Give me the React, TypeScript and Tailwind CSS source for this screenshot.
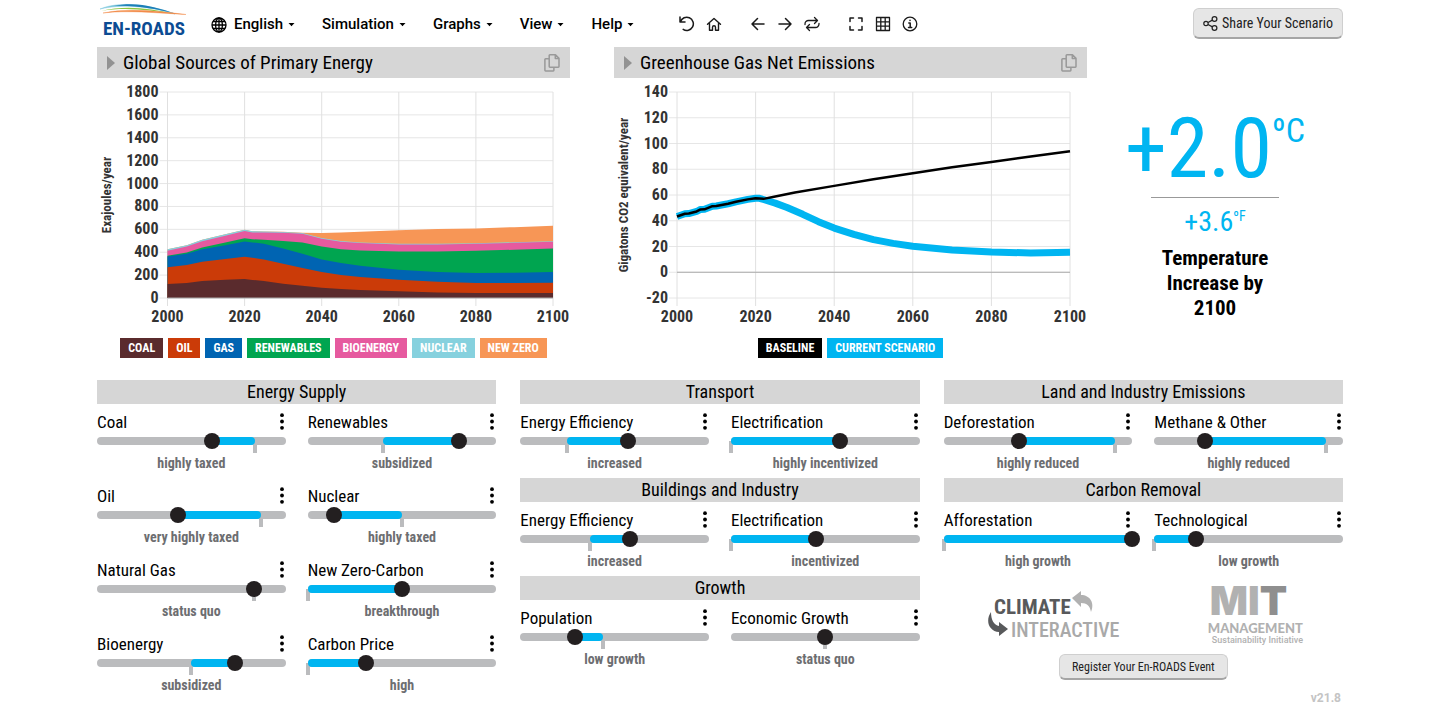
import { useState } from 'react'
import type { ReactNode } from 'react'

type SliderData = { name: string; status: string; value: number; start: number }
type Point = [number, number]

const supply: SliderData[] = [
  { name: 'Coal', status: 'highly taxed', value: 61, start: 84 },
  { name: 'Renewables', status: 'subsidized', value: 80, start: 40 },
  { name: 'Oil', status: 'very highly taxed', value: 43, start: 87 },
  { name: 'Nuclear', status: 'highly taxed', value: 14, start: 50 },
  { name: 'Natural Gas', status: 'status quo', value: 83, start: 83 },
  { name: 'New Zero-Carbon', status: 'breakthrough', value: 50, start: 0 },
  { name: 'Bioenergy', status: 'subsidized', value: 73, start: 50 },
  { name: 'Carbon Price', status: 'high', value: 31, start: 0 },
]

const transport: SliderData[] = [
  { name: 'Energy Efficiency', status: 'increased', value: 57, start: 25 },
  { name: 'Electrification', status: 'highly incentivized', value: 58, start: 0 },
]

const buildings: SliderData[] = [
  { name: 'Energy Efficiency', status: 'increased', value: 58, start: 37 },
  { name: 'Electrification', status: 'incentivized', value: 45, start: 0 },
]

const growth: SliderData[] = [
  { name: 'Population', status: 'low growth', value: 29, start: 44 },
  { name: 'Economic Growth', status: 'status quo', value: 50, start: 50 },
]

const land: SliderData[] = [
  { name: 'Deforestation', status: 'highly reduced', value: 40, start: 91 },
  { name: 'Methane & Other', status: 'highly reduced', value: 27, start: 91 },
]

const removal: SliderData[] = [
  { name: 'Afforestation', status: 'high growth', value: 100, start: 0 },
  { name: 'Technological', status: 'low growth', value: 22, start: 0 },
]

const years = [2000, 2005, 2009, 2015, 2020, 2022, 2025, 2030, 2035, 2040, 2045, 2050, 2060, 2070, 2080, 2090, 2100]

// running totals in exajoules, biggest stack first so the smaller ones paint over it
const stacks = [
  { color: '#f79656', top: [425, 460, 509, 556, 597, 583, 581, 579, 571, 567, 572, 579, 593, 602, 608, 619, 631] },
  { color: '#86d1de', top: [425, 460, 509, 556, 597, 583, 581, 577, 567, 524, 498, 486, 473, 473, 479, 487, 496] },
  { color: '#e65a9f', top: [413, 450, 496, 544, 585, 573, 573, 570, 561, 518, 491, 480, 468, 468, 474, 482, 491] },
  { color: '#00a550', top: [370, 398, 442, 485, 523, 513, 509, 497, 486, 451, 427, 416, 407, 407, 413, 422, 433] },
  { color: '#0064b2', top: [363, 387, 427, 462, 494, 486, 474, 433, 387, 337, 305, 282, 247, 227, 218, 221, 227] },
  { color: '#cb3b08', top: [268, 288, 317, 341, 361, 352, 337, 299, 262, 227, 201, 183, 160, 142, 131, 131, 134] },
  { color: '#5a2b2d', top: [122, 131, 148, 160, 166, 158, 148, 125, 108, 90, 79, 70, 58, 49, 44, 44, 44] },
]

const history: Point[] = [
  [2000, 43.3], [2002, 45.4], [2003, 45.6], [2005, 47.2], [2006, 48.8], [2007, 48.9], [2009, 51.3], [2010, 51.5],
  [2013, 53.2], [2015, 54.7], [2018, 56.6], [2020, 57.5],
]

const baseline: Point[] = [
  ...history,
  [2022, 57], [2025, 58.8], [2030, 62], [2040, 67.1], [2050, 72.3], [2060, 76.9], [2070, 81.6], [2080, 85.7], [2090, 89.9], [2100, 94],
]

const scenario: Point[] = [
  ...history,
  [2021, 57.4], [2022, 56.5], [2025, 53.7], [2028, 50.3], [2032, 45], [2036, 39.3], [2040, 34.3], [2045, 29.4], [2050, 25.3],
  [2055, 22.4], [2060, 20.2], [2070, 17.3], [2080, 15.7], [2090, 15], [2100, 15.5],
]

function Dots() {
  return (
    <svg width="4" height="17" viewBox="0 0 4 17" fill="#000">
      <circle cx="2" cy="2.200" r="1.900" />
      <circle cx="2" cy="8.500" r="1.900" />
      <circle cx="2" cy="14.800" r="1.900" />
    </svg>
  )
}

function Slider({ group, item }: { group: string; item: SliderData }) {
  const [value, setValue] = useState(item.value)
  const id = `${group}-${item.name}`.toLowerCase().replace(/[^a-z]+/g, '-')
  const from = Math.min(value, item.start)
  const size = Math.abs(value - item.start)

  return (
    <div className="h-[74px] min-w-0 pt-1.5">
      <div className="flex h-[23px] items-center justify-between">
        <label htmlFor={id} className="whitespace-nowrap text-[17px] leading-6">{item.name}</label>
        <button type="button" aria-label={`${item.name} details`} className="px-0.5"><Dots /></button>
      </div>
      <div className="relative h-4">
        <span className="absolute top-2 h-3 w-1 -translate-x-1/2 bg-[#bbbcbe]" style={{ left: `${item.start}%` }} />
        <span className="absolute inset-x-0 top-1 h-2 rounded-full bg-[#bbbcbe]" />
        <span className="absolute top-1 h-2 rounded-full bg-[#00b5f1]" style={{ left: `${from}%`, width: `${size}%` }} />
        <input
          id={id}
          type="range"
          min="0"
          max="100"
          value={value}
          onChange={(e) => setValue(Number(e.target.value))}
          className="absolute -left-2 top-0 h-4 w-[calc(100%+16px)] cursor-pointer appearance-none bg-transparent [&::-webkit-slider-thumb]:size-4 [&::-webkit-slider-thumb]:appearance-none [&::-webkit-slider-thumb]:rounded-full [&::-webkit-slider-thumb]:bg-[#231f20]"
        />
      </div>
      <p className="mt-1 text-center text-sm font-bold leading-5 text-[#6d6e71]">{item.status}</p>
    </div>
  )
}

function Section({ title, items }: { title: string; items: SliderData[] }) {
  return (
    <section>
      <h2 className="h-6 bg-[#d6d6d6] text-center text-lg leading-6">{title}</h2>
      <div className="grid grid-cols-2 gap-x-[22px]">
        {items.map((item) => (
          <Slider key={item.name} group={title} item={item} />
        ))}
      </div>
    </section>
  )
}

function GraphTitle({ children }: { children: ReactNode }) {
  return (
    <div className="flex h-[31px] items-center bg-[#d6d6d6] px-2.5">
      <svg width="8" height="14" viewBox="0 0 8 14" fill="#929292"><path d="M0 0l8 7-8 7z" /></svg>
      <h2 className="ml-2 flex-1 text-[19px] leading-8">{children}</h2>
      <button type="button" aria-label="Copy graph">
        <svg width="16" height="18" viewBox="0 0 16 18" fill="none" stroke="#999" strokeWidth="1.5" strokeLinejoin="round">
          <path d="M5.2 1.5q0-.7.7-.7h5.600l3.500 3.500v8.200q0 .7-.7.7H5.900q-.7 0-.7-.7zM11.300 1v3.500H15M5 4.800H1.600q-.7 0-.7.7v10.800q0 .7.7.7h7.600q.7 0 .7-.7v-3" />
        </svg>
      </button>
    </div>
  )
}

type ChartProps = { unit: string; left: number; min: number; max: number; step: number; children: ReactNode }

function Chart({ unit, left, min, max, step, children }: ChartProps) {
  const ticks: number[] = []
  for (let v = min; v <= max; v += step) ticks.push(v)
  const y = (v: number) => 220 - ((v - min) / (max - min)) * 206
  const x = (year: number) => left + ((year - 2000) / 100) * (456 - left)

  return (
    <svg viewBox="0 0 473 252" className="block w-full" role="img" aria-label={unit}>
      {ticks.map((v) => (
        <line key={v} x1={left - 8} x2="456" y1={y(v)} y2={y(v)} stroke="#e6e6e6" />
      ))}
      {[2000, 2020, 2040, 2060, 2080, 2100].map((year) => (
        <g key={year}>
          <line x1={x(year)} x2={x(year)} y1="14" y2="228" stroke="#e0e0e0" />
          <text x={x(year)} y="244" textAnchor="middle" fontSize="16" fontWeight="700" fill="#333">{year}</text>
        </g>
      ))}
      {children}
      <line x1={left} x2="456" y1={y(0)} y2={y(0)} stroke="#aaa" />
      {ticks.map((v) => (
        <text key={v} x={left - 9} y={y(v) + 5} textAnchor="end" fontSize="16" fontWeight="700" fill="#333">{v}</text>
      ))}
      <text transform="translate(14 117) rotate(-90)" textAnchor="middle" fontSize="13" fontWeight="700" fill="#333">{unit}</text>
    </svg>
  )
}

function areaPoints(top: number[]) {
  const line = years.map((year, i) => `${70.5 + (year - 2000) * 3.855},${220 - (top[i] / 1800) * 206}`)
  return ['70.5,220', ...line, '456,220'].join(' ')
}

function linePoints(data: Point[]) {
  return data.map(([year, v]) => `${63 + (year - 2000) * 3.93},${220 - ((v + 20) / 160) * 206}`).join(' ')
}

function Menu({ label, icon }: { label: string; icon?: ReactNode }) {
  return (
    <button type="button" className="flex items-center whitespace-nowrap font-[Roboto,sans-serif] text-[15px] font-medium">
      {icon}
      {label}
      <svg width="7" height="4" viewBox="0 0 7 4" className="ml-[5px]"><path d="M.5 0h6l-3 3.200z" /></svg>
    </button>
  )
}

function Tool({ label, children }: { label: string; children: ReactNode }) {
  return (
    <button type="button" aria-label={label} className="flex w-[27px] justify-center">
      <svg width="16" height="16" viewBox="0 0 16 16" fill="none" stroke="#1a1a1a" strokeWidth="1.5" strokeLinecap="round" strokeLinejoin="round">
        {children}
      </svg>
    </button>
  )
}

const raised = 'rounded-md border border-b-2 border-[#cfcfcf] border-b-[#a5a5a5] bg-[#e6e6e6] text-[#222]'

export default function App() {
  return (
    <div className="min-h-screen bg-white px-[97px] font-['Roboto_Condensed','Liberation_Sans_Narrow',sans-serif] text-black">
      <header className="flex h-[47px] items-center">
        <a href="#" aria-label="En-ROADS">
          <svg width="94" height="44" viewBox="0 0 94 44">
            <path d="M3 7C22-1 52 2 78 12 52 4 22 2 3 7z" fill="#7cc7dc" stroke="#7cc7dc" strokeWidth=".5" />
            <path d="M16 4C40-1 58 5 80 12 58 7 40 3 16 4z" fill="#1d7fb8" />
            <path d="M4 9C28 3 52 6 78 12 52 8 28 5 4 9z" fill="#8cc540" />
            <path d="M6 11C30 6 60 9 89 12.500 60 11 30 8 6 11z" fill="#f28c4a" stroke="#f28c4a" strokeWidth=".4" />
            <text x="6" y="33" fontSize="19" fontWeight="700" fill="#0c4c93">EN-ROADS</text>
          </svg>
        </a>
        {/* Menus */}
        <nav className="ml-5 flex items-center gap-[27px] pt-0.5">
          <Menu
            label="English"
            icon={
              <svg width="16" height="16" viewBox="0 0 16 16" fill="none" stroke="#000" strokeWidth="1.300" className="mr-[7px]">
                <circle cx="8" cy="8" r="7" />
                <ellipse cx="8" cy="8" rx="3.400" ry="7" />
                <path d="M8 1v14M1 8h14M2 4.500h12M2 11.500h12" />
              </svg>
            }
          />
          <Menu label="Simulation" />
          <Menu label="Graphs" />
          <Menu label="View" />
          <Menu label="Help" />
        </nav>
        {/* Tools */}
        <div className="ml-[39px] flex items-center gap-[17px]">
          <div className="flex">
            <Tool label="Undo"><path d="M1 1v5H6M1.500 5.700A6.600 6.600 0 1 1 4.200 13.400" /></Tool>
            <Tool label="Home"><path d="M1.500 8.200L8 2.500l6.500 5.700M3.500 7.500v6.700h3v-3a1.500 1.500 0 0 1 3 0v3h3V7.500" strokeWidth="1.400" /></Tool>
          </div>
          <div className="flex">
            <Tool label="Back"><path d="M14 8H2M7.500 2.500L2 8l5.500 5.500" /></Tool>
            <Tool label="Forward"><path d="M2 8h12M8.500 2.500L14 8l-5.500 5.500" /></Tool>
            <Tool label="Replay"><path d="M1 8.500V8a3.500 3.500 0 0 1 3.500-3.500H13M10.500 1.500L13.500 4.500l-3 3M15 7.500V8a3.500 3.500 0 0 1-3.500 3.500H3M5.500 8.500L2.500 11.500l3 3" strokeWidth="1.300" /></Tool>
          </div>
          <div className="flex">
            <Tool label="Full screen"><path d="M2 5.500V2h3.500M10.500 2H14v3.500M14 10.500V14h-3.500M5.500 14H2v-3.500" /></Tool>
            <Tool label="Table"><path d="M1.500 1.500h13v13h-13zM1.500 5.800h13M1.500 10.200h13M5.800 1.500v13M10.200 1.500v13" strokeWidth="1.300" /></Tool>
            <Tool label="Info"><circle cx="8" cy="8" r="6.800" strokeWidth="1.300" /><path d="M6.800 7H8.200v4.300M6.500 11.500h3.200M8 4.300v.3" /></Tool>
          </div>
        </div>
        <button type="button" className={`ml-auto flex h-[31px] w-[150px] items-center justify-center gap-1 text-sm ${raised}`}>
          <svg width="15" height="15" viewBox="0 0 15 15" fill="none" stroke="#222" strokeWidth="1.200">
            <circle cx="3" cy="7.500" r="2.200" />
            <circle cx="11.500" cy="3" r="2.400" />
            <circle cx="11.500" cy="12" r="2.400" />
            <path d="M5 6.500l4.400-2.400M5 8.500l4.400 2.400" />
          </svg>
          Share Your Scenario
        </button>
      </header>

      <main>
        {/* Graphs */}
        <div className="flex">
          <div className="grid flex-1 grid-cols-2 gap-11">
            <section>
              <GraphTitle>Global Sources of Primary Energy</GraphTitle>
              <Chart unit="Exajoules/year" left={70.5} min={0} max={1800} step={200}>
                {stacks.map((s) => (
                  <polygon key={s.color} points={areaPoints(s.top)} fill={s.color} />
                ))}
              </Chart>
              <ul className="mt-2 flex justify-center gap-[5px] text-xs font-bold leading-5 text-white">
                <li className="bg-[#5a2b2d] px-2">COAL</li>
                <li className="bg-[#cb3b08] px-2">OIL</li>
                <li className="bg-[#0064b2] px-2">GAS</li>
                <li className="bg-[#00a550] px-2">RENEWABLES</li>
                <li className="bg-[#e65a9f] px-2">BIOENERGY</li>
                <li className="bg-[#86d1de] px-2">NUCLEAR</li>
                <li className="bg-[#f79656] px-2">NEW ZERO</li>
              </ul>
            </section>
            <section>
              <GraphTitle>Greenhouse Gas Net Emissions</GraphTitle>
              <Chart unit="Gigatons CO2 equivalent/year" left={63} min={-20} max={140} step={20}>
                <polyline points={linePoints(scenario)} fill="none" stroke="#00b5f1" strokeWidth="7" strokeLinejoin="round" />
                <polyline points={linePoints(baseline)} fill="none" stroke="#000" strokeWidth="2.500" strokeLinejoin="round" />
              </Chart>
              <ul className="mt-2 flex justify-center gap-[5px] text-xs font-bold leading-5 text-white">
                <li className="bg-black px-2">BASELINE</li>
                <li className="bg-[#00b5f1] px-2">CURRENT SCENARIO</li>
              </ul>
            </section>
          </div>
          <aside className="flex w-64 flex-col items-center pt-[58px]">
            <p className="flex text-[#00b5f1]">
              <span className="text-[84px] leading-[88px]">+2.0</span>
              <span className="text-[34px] leading-[50px]">ºC</span>
            </p>
            <hr className="mt-1 w-32 border-[#999]" />
            <p className="mt-2 flex text-[#00b5f1]">
              <span className="text-[28px] leading-8">+3.6</span>
              <span className="text-sm leading-5">ºF</span>
            </p>
            <p className="mt-2 w-32 text-center text-[21px] font-bold leading-[25px]">Temperature Increase by 2100</p>
          </aside>
        </div>

        {/* Sliders */}
        <div className="mt-[22px] grid grid-cols-3 gap-6">
          <Section title="Energy Supply" items={supply} />
          <div>
            <Section title="Transport" items={transport} />
            <Section title="Buildings and Industry" items={buildings} />
            <Section title="Growth" items={growth} />
          </div>
          <div>
            <Section title="Land and Industry Emissions" items={land} />
            <Section title="Carbon Removal" items={removal} />
            <div className="mt-1 flex items-end justify-between pl-11 pr-10">
              <a href="#" aria-label="Climate Interactive">
                <svg width="134" height="58" viewBox="0 0 134 58">
                  <text x="6" y="26" fontSize="21" fontWeight="700" fill="#58595b">CLIMATE</text>
                  <text x="23" y="49" fontSize="20" fontWeight="500" fill="#a9a9a9">INTERACTIVE</text>
                  <path d="M84 10l9-7v4c9 0 14 8 10 17-1-6-4-9-10-9v4z" fill="#b1b1b1" />
                  <path d="M3 24c-6 9-2 19 8 20v4l9-7-9-7v4c-5-1-8-6-8-14z" fill="#58595b" />
                </svg>
              </a>
              <a href="#" className="flex flex-col items-start font-[Inter,sans-serif] font-black text-[#b1b1b1]">
                <span className="pl-0.5 text-[40px] leading-[42px]">MI<span className="text-[#8f8f8f]">T</span></span>
                <span className="font-[Lato,sans-serif] text-[13px] leading-3">MANAGEMENT</span>
                <span className="pl-1 font-[Roboto,sans-serif] text-[9px] font-medium leading-3">Sustainability Initiative</span>
              </a>
            </div>
            <button type="button" className={`mx-auto mt-2 block h-[26px] w-[169px] text-xs ${raised}`}>
              Register Your En-ROADS Event
            </button>
            <p className="mt-2.5 pr-0.5 text-right font-[Roboto,sans-serif] text-xs font-bold text-[#c4c4c4]">v21.8</p>
          </div>
        </div>
      </main>
    </div>
  )
}
